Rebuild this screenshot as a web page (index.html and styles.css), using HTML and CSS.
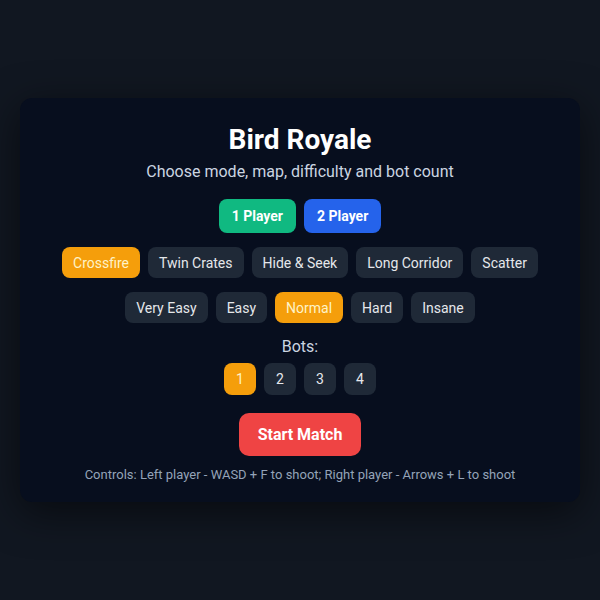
FILE: index.html
```html
<!DOCTYPE html>
<html>
<head>
<meta charset="utf-8">
<link rel="stylesheet" href="styles.css">
</head>
<body>
<div class="card">
  <h1 class="title">Bird Royale</h1>
  <p class="subtitle">Choose mode, map, difficulty and bot count</p>
  <div class="row modes">
    <button class="btn mode green">1 Player</button>
    <button class="btn mode blue">2 Player</button>
  </div>
  <div class="row maps">
    <button class="btn opt active">Crossfire</button>
    <button class="btn opt">Twin Crates</button>
    <button class="btn opt">Hide &amp; Seek</button>
    <button class="btn opt">Long Corridor</button>
    <button class="btn opt">Scatter</button>
  </div>
  <div class="row diffs">
    <button class="btn opt">Very Easy</button>
    <button class="btn opt">Easy</button>
    <button class="btn opt active">Normal</button>
    <button class="btn opt">Hard</button>
    <button class="btn opt">Insane</button>
  </div>
  <div class="label">Bots:</div>
  <div class="row bots">
    <button class="btn bot active">1</button>
    <button class="btn bot">2</button>
    <button class="btn bot">3</button>
    <button class="btn bot">4</button>
  </div>
  <button class="btn start">Start Match</button>
  <p class="controls">Controls: Left player - WASD + F to shoot; Right player - Arrows + L to shoot</p>
</div>
</body>
</html>
```
FILE: styles.css
```css
* { box-sizing: border-box; }
html, body { margin: 0; padding: 0; }
body {
  width: 600px;
  height: 600px;
  background: #111721;
  font-family: Roboto, "Noto Sans", sans-serif;
  display: flex;
  align-items: center;
  justify-content: center;
}
.card {
  width: 560px;
  height: 404px;
  background: #070e1e;
  border-radius: 12px;
  box-shadow: 0 10px 40px rgba(0,0,0,0.55);
  display: flex;
  flex-direction: column;
  align-items: center;
  padding-top: 25px;
}
.title {
  margin: 0;
  font-size: 28px;
  line-height: 34px;
  font-weight: 700;
  color: #ffffff;
}
.subtitle {
  margin: 5px 0 0;
  font-size: 16px;
  line-height: 20px;
  color: #cbd5e1;
}
.row {
  display: flex;
  gap: 8px;
  justify-content: center;
}
.btn {
  border: none;
  font-family: inherit;
  cursor: pointer;
  border-radius: 8px;
  color: #e5e7eb;
}
.modes { margin-top: 17px; }
.mode {
  height: 34px;
  padding: 0 13px;
  font-size: 14px;
  font-weight: 700;
  color: #ffffff;
}
.green { background: #10b981; }
.blue { background: #2563eb; }
.maps { margin-top: 14px; }
.diffs { margin-top: 14px; }
.opt {
  height: 31px;
  padding: 0 11px;
  font-size: 14px;
  background: #1f2937;
}
.opt.active, .bot.active {
  background: #f59e0b;
  color: #fef3c7;
}
.label {
  margin-top: 14px;
  font-size: 16px;
  line-height: 20px;
  color: #cbd5e1;
}
.bots { margin-top: 6px; }
.bot {
  width: 32px;
  height: 32px;
  padding: 0;
  font-size: 14px;
  background: #1f2937;
}
.start {
  margin-top: 18px;
  height: 43px;
  padding: 0 19px;
  font-size: 16px;
  font-weight: 700;
  color: #ffffff;
  background: #ef4444;
  border-radius: 10px;
}
.controls {
  margin: 11px 0 0;
  font-size: 13px;
  line-height: 16px;
  color: #94a3b8;
}
```
